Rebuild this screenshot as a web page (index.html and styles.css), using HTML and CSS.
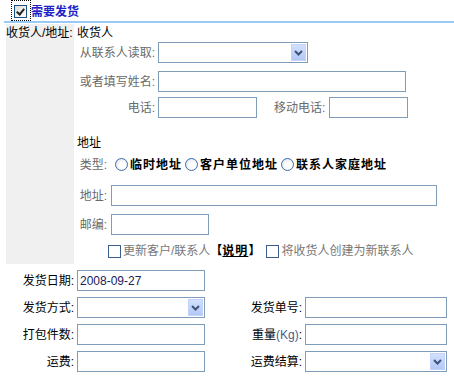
FILE: index.html
```html
<!DOCTYPE html>
<html>

<head>
    <meta charset="utf-8">
    <title>发货</title>

    <link rel="stylesheet" href="styles.css">
</head>

<body>

    <div class="head">
        <label class="focus"><input type="checkbox" class="cb" checked></label>
        <span class="need">需要发货</span>
    </div>

    <div class="recv">
        <div class="side">收货人/地址:</div>
        <div class="main">
            <div class="title">收货人</div>
            <div class="row r1">
                <span class="lbl">从联系人读取:</span>
                <span class="sel w150"><select></select><span class="arrow"><svg width="9" height="6" viewBox="0 0 9 6"><path d="M1 1 L4.5 4.5 L8 1" stroke="#3f5278" stroke-width="2" fill="none"/></svg></span></span>
            </div>
            <div class="row r2">
                <span class="lbl">或者填写姓名:</span>
                <input type="text" class="w248">
            </div>
            <div class="row r3">
                <span class="lbl">电话:</span>
                <input type="text" class="w99">
                <span class="lbl2">移动电话:</span>
                <input type="text" class="w79">
            </div>

            <div class="title t2">地址</div>
            <div class="row r4">
                <span class="lbl short">类型:</span>
                <label class="opt first"><input type="radio" name="atype" class="rd"><b>临时地址</b></label>
                <label class="opt"><input type="radio" name="atype" class="rd"><b>客户单位地址</b></label>
                <label class="opt"><input type="radio" name="atype" class="rd"><b>联系人家庭地址</b></label>
            </div>
            <div class="row r5">
                <span class="lbl short">地址:</span>
                <input type="text" class="w326">
            </div>
            <div class="row r6">
                <span class="lbl short">邮编:</span>
                <input type="text" class="w98">
            </div>
            <div class="checks">
                <label class="chk"><input type="checkbox" class="cb">更新客户/联系人<b class="br">【<u>说明</u>】</b></label>
                <label class="chk second"><input type="checkbox" class="cb">将收货人创建为新联系人</label>
            </div>
        </div>
    </div>

    <div class="ship">
        <span class="blbl">发货日期:</span>
        <input type="text" class="date" value="2008-09-27">
        <span></span>
        <span></span>

        <span class="blbl">发货方式:</span>
        <span class="sel"><select></select><span class="arrow"><svg width="9" height="6" viewBox="0 0 9 6"><path d="M1 1 L4.5 4.5 L8 1" stroke="#3f5278" stroke-width="2" fill="none"/></svg></span></span>
        <span class="blbl">发货单号:</span>
        <input type="text">

        <span class="blbl">打包件数:</span>
        <input type="text">
        <span class="blbl">重量<span class="kg">(Kg)</span>:</span>
        <input type="text">

        <span class="blbl">运费:</span>
        <input type="text">
        <span class="blbl">运费结算:</span>
        <span class="sel"><select></select><span class="arrow"><svg width="9" height="6" viewBox="0 0 9 6"><path d="M1 1 L4.5 4.5 L8 1" stroke="#3f5278" stroke-width="2" fill="none"/></svg></span></span>
    </div>

</body>

</html>
```

FILE: styles.css
```css
body {
    margin: 0;
    background: #fff;
    color: #000;
    font-family: "Liberation Sans", "Noto Sans CJK SC", sans-serif;
    font-size: 12px;
    line-height: 14px;
}

input[type="text"],
select {
    box-sizing: border-box;
    height: 21px;
    margin: 0;
    padding: 0 2px;
    border: 1px solid #7f9db9;
    background: #fff;
    font-family: "Liberation Sans", "Noto Sans CJK SC", sans-serif;
    font-size: 12px;
    color: #20205a;
}

/* header */
.head {
    display: flex;
    align-items: flex-start;
    height: 21px;
    margin-left: 4px;
    padding-left: 7px;
    border-bottom: 2px solid #99c9f5;
}

.focus {
    display: flex;
    box-sizing: border-box;
    width: 20px;
    height: 21px;
    padding: 4px 0 0 2px;
    border: 1px dotted #000;
}

.need {
    margin-top: 5px;
    color: #1f1fc8;
    font-weight: bold;
}

/* check boxes and radios */
.cb {
    appearance: none;
    position: relative;
    box-sizing: border-box;
    width: 13px;
    height: 13px;
    margin: 0;
    border: 1px solid #1c5180;
    background: linear-gradient(135deg, #dcdcd7, #fff);
    flex: none;
}

.cb:checked::after {
    content: "";
    position: absolute;
    left: 3px;
    top: 1px;
    width: 3px;
    height: 6px;
    border: solid #222;
    border-width: 0 2px 2px 0;
    transform: rotate(40deg);
}

.rd {
    appearance: none;
    box-sizing: border-box;
    width: 13px;
    height: 13px;
    margin: 0 2px 0 0;
    border: 1px solid #3b6aa8;
    border-radius: 50%;
    background: radial-gradient(circle at 60% 60%, #fff 30%, #d8dde6);
    flex: none;
}

/* receiver block */
.recv {
    display: flex;
    margin: 1px 0 0 6px;
}

.side {
    width: 68px;
    padding-top: 2px;
    background: #f0f0f0;
    white-space: nowrap;
}

.main {
    padding: 2px 0 6px 3px;
}

.row {
    display: flex;
    align-items: center;
    height: 21px;
}

.lbl {
    width: 78px;
    margin-right: 3px;
    text-align: right;
    color: #6a6a6a;
    white-space: nowrap;
}

.lbl.short {
    width: 30px;
    margin-right: 4px;
}

.lbl2 {
    margin: 0 4px 0 17px;
    color: #6a6a6a;
}

.r1 { margin-top: 2px; }
.r2 { margin-top: 8px; }
.r3 { margin-top: 5px; }
.t2 { margin-top: 18px; }
.r4 { margin-top: 4px; }
.r5 { margin-top: 10px; }
.r6 { margin-top: 8px; }

.w150 { width: 150px; }
.w248 { width: 248px; }
.w99 { width: 99px; }
.w79 { width: 79px; }
.w326 { width: 326px; }
.w98 { width: 98px; }

.opt {
    display: flex;
    align-items: center;
    margin-left: 3px;
    letter-spacing: 1px;
    white-space: nowrap;
}

.opt.first {
    margin-left: 4px;
}

.checks {
    display: flex;
    align-items: center;
    margin: 9px 0 0 31px;
    color: #777;
}

.chk {
    display: flex;
    align-items: center;
    white-space: nowrap;
}

.chk .cb {
    margin-right: 2px;
    border-color: #3b5e8e;
    background: #fff;
}

.chk.second {
    margin-left: 6px;
}

.br {
    color: #000;
}

.br u {
    letter-spacing: 1px;
}

/* select with xp style arrow */
.sel {
    position: relative;
    display: block;
    height: 21px;
}

.sel select {
    width: 100%;
    appearance: none;
}

.arrow {
    position: absolute;
    right: 2px;
    top: 2px;
    display: flex;
    align-items: center;
    justify-content: center;
    box-sizing: border-box;
    width: 15px;
    height: 17px;
    border: 1px solid #c3d3fd;
    background: linear-gradient(#d2e0fd, #b3c8f6);
}

/* shipping block */
.ship {
    display: grid;
    grid-template-columns: 77px 128px 100px 142px;
    grid-auto-rows: 21px;
    row-gap: 6px;
    margin-top: 6px;
}

.blbl {
    align-self: center;
    padding-right: 3px;
    text-align: right;
    white-space: nowrap;
}

.kg {
    color: #4b5a8c;
}

.date {
    color: #20205a;
}
```
